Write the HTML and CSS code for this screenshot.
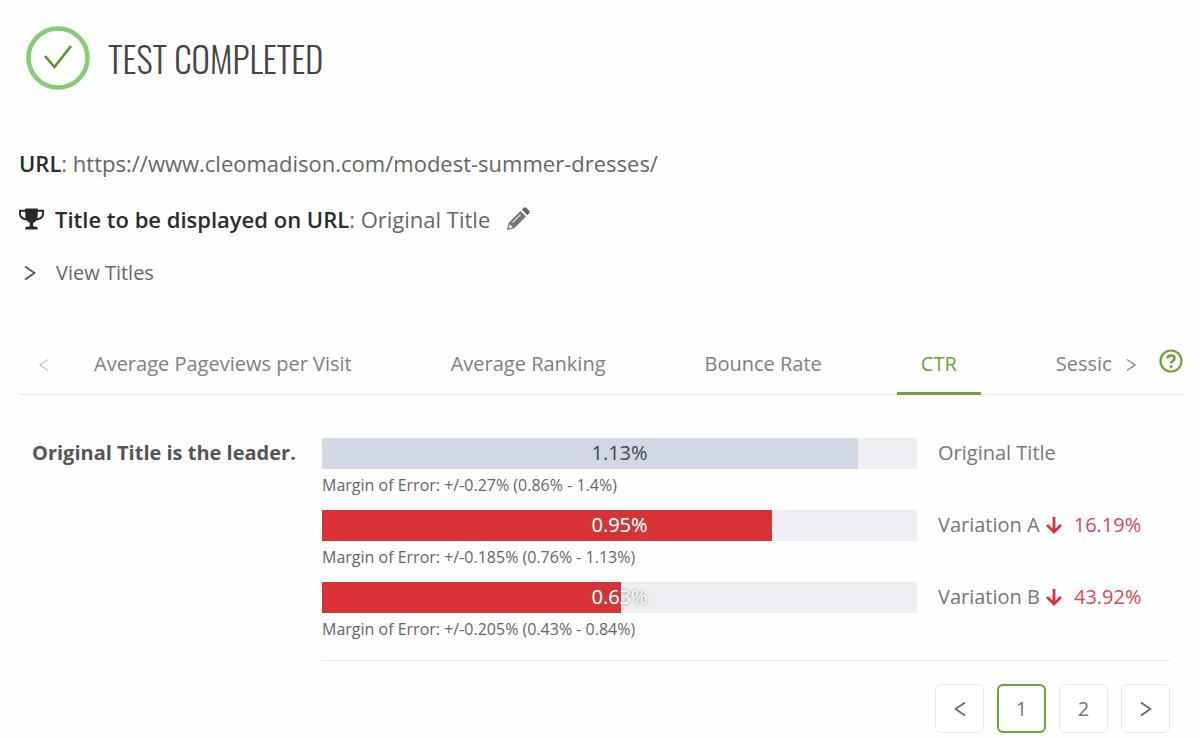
FILE: index.html
```
<!DOCTYPE html>
<html lang="en">
<head>
  <meta charset="utf-8">
  <title>Test Completed</title>
  <link rel="stylesheet" href="styles.css">
</head>
<body>
  <div id="main">
    <header class="status">
      <svg class="status-icon" viewBox="0 0 64 64">
        <circle cx="32" cy="32" r="29.5" fill="none" stroke="#84cd72" stroke-width="4.6"/>
        <path d="M19 30 L28.500 41 L45 20" fill="none" stroke="#58962f" stroke-width="2.600"/>
      </svg>
      <h1>TEST COMPLETED</h1>
    </header>

    <p class="info"><b>URL</b>: https://www.cleomadison.com/modest-summer-dresses/</p>

    <div class="info title-row">
      <svg class="trophy" viewBox="0 0 26 24">
        <path fill="#282828" d="M6.500 1h13v1.500H26v4c0 4-3.500 6.500-8 7-1 1.300-2.200 2-3.200 2.300V19.500c2.700.2 4.200 .7 4.700 2v1.500H6.500v-1.500c.5-1.300 2-1.800 4.700-2v-3.700c-1-.3-2.200-1-3.200-2.300C3.500 13 0 10.500 0 6.500V2.500h6.500zM2 4.500v2c0 2.200 1.500 4 4.800 4.700C6.500 9.500 6.500 7 6.500 4.500zm22 0h-4.500c0 2.500 0 5-.3 6.700C22.500 10.500 24 8.700 24 6.500z"/>
      </svg>
      <p><b>Title to be displayed on URL</b>: Original Title</p>
      <button class="plain edit" aria-label="Edit title">
        <svg viewBox="0 0 26 26" width="26" height="26">
          <path d="M3.500 17 L15.500 5 L21 10.500 L9 22.500 L2 24 Z" fill="#777"/>
          <path d="M16.800 3.700 L18.700 1.800 Q20 .7 21.300 1.800 L24.200 4.700 Q25.300 6 24.200 7.300 L22.300 9.200 Z" fill="#666"/>
          <path d="M4.700 18.300 L7.800 21.400 L3.800 22.300 Z" fill="#fff"/>
          <path d="M7.500 16.500 L15.700 8.300" stroke="#ddd" stroke-width="1.200"/>
        </svg>
      </button>
    </div>

    <button class="plain view-titles">
      <svg viewBox="0 0 12 16" width="12" height="16"><path d="M1 1.500 L10.500 8 L1 14.500" fill="none" stroke="#555" stroke-width="1.800"/></svg>
      View Titles
    </button>

    <div class="tab-bar">
      <button class="plain arrow-prev" aria-label="Previous tabs">
        <svg viewBox="0 0 12 16" width="12" height="16"><path d="M10 2.500 L2 8 L10 13.500" fill="none" stroke="#ccc" stroke-width="1.500"/></svg>
      </button>
      <div class="tabs" role="tablist">
        <button class="plain tab" role="tab">Average Pageviews per Visit</button>
        <button class="plain tab" role="tab">Average Ranking</button>
        <button class="plain tab" role="tab">Bounce Rate</button>
        <button class="plain tab active" role="tab" aria-selected="true">CTR</button>
        <button class="plain tab" role="tab">Session</button>
      </div>
      <button class="plain arrow-next" aria-label="Next tabs">
        <svg viewBox="0 0 12 16" width="12" height="16"><path d="M2 2.500 L10 8 L2 13.500" fill="none" stroke="#888" stroke-width="1.500"/></svg>
      </button>
      <button class="plain help" aria-label="Help">
        <svg viewBox="0 0 24 24" width="24" height="24" fill="none" stroke="#6aa338">
          <circle cx="12" cy="12" r="10.500" stroke-width="2.200"/>
          <path d="M8.500 9.500 C8.700 5.500 15.500 5.500 15.500 9.500 C15.500 11.800 12.200 11.800 12.200 14.500" stroke-width="2.600"/>
          <circle cx="12.200" cy="17.500" r="1.500" fill="#6aa338" stroke="none"/>
        </svg>
      </button>
    </div>

    <div class="results">
      <p class="leader">Original Title is the leader.</p>
      <div class="rows">
        <div class="row">
          <div class="track">
            <div class="fill" style="width: 90%"></div>
            <span class="value">1.13%</span>
          </div>
          <p class="name">Original Title</p>
          <p class="margin">Margin of Error: +/-0.27% (0.86% - 1.4%)</p>
        </div>
        <div class="row losing">
          <div class="track">
            <div class="fill" style="width: 75.7%"></div>
            <span class="value">0.95%</span>
          </div>
          <p class="name">Variation A
            <svg class="down" viewBox="0 0 18 18"><path d="M9 1 V15.500 M2 9 L9 16 L16 9" fill="none" stroke="#d93234" stroke-width="2.800"/></svg>
            <span class="drop">16.19%</span></p>
          <p class="margin">Margin of Error: +/-0.185% (0.76% - 1.13%)</p>
        </div>
        <div class="row losing">
          <div class="track">
            <div class="fill" style="width: 50.2%"></div>
            <span class="value">0.63%</span>
          </div>
          <p class="name">Variation B
            <svg class="down" viewBox="0 0 18 18"><path d="M9 1 V15.500 M2 9 L9 16 L16 9" fill="none" stroke="#d93234" stroke-width="2.800"/></svg>
            <span class="drop">43.92%</span></p>
          <p class="margin">Margin of Error: +/-0.205% (0.43% - 0.84%)</p>
        </div>
        <nav class="pages">
          <button class="page" aria-label="Previous page">
            <svg viewBox="0 0 12 16" width="12" height="16"><path d="M11 1.500 L1.500 8 L11 14.500" fill="none" stroke="#666" stroke-width="1.800"/></svg>
          </button>
          <button class="page current">1</button>
          <button class="page">2</button>
          <button class="page" aria-label="Next page">
            <svg viewBox="0 0 12 16" width="12" height="16"><path d="M1 1.500 L10.500 8 L1 14.500" fill="none" stroke="#666" stroke-width="1.800"/></svg>
          </button>
        </nav>
      </div>
    </div>
  </div>
</body>
</html>
```
FILE: styles.css
```
*{
  box-sizing: border-box;
  padding: 0;
  margin: 0;
}

body{
  background-color: #fefefe;
  color: #666;
  font-family: "Open Sans", "Liberation Sans", sans-serif;
  font-size: 20px;
  line-height: 30px;
}

svg{
  display: block;
  flex: none;
}

.plain{
  display: flex;
  align-items: center;
  background: none;
  border: none;
  color: inherit;
  font: inherit;
  cursor: pointer;
}

#main{
  padding: 24px 17px 0 19px;
}

/* heading */
.status{
  display: flex;
  align-items: center;
  gap: 18px;
  padding-left: 7px;
  margin-bottom: 56px;
}
.status-icon{
  width: 64px;
  height: 68px;
}
h1{
  color: #444;
  font-family: Oswald, "Liberation Sans Narrow", sans-serif;
  font-size: 35px;
  font-weight: 300;
  line-height: 48px;
}

.info{
  font-size: 22px;
}
.info b{
  color: #2b2b2b;
  font-weight: 600;
}
.title-row{
  display: flex;
  align-items: center;
  margin-top: 26px;
}
.trophy{
  width: 25px;
  height: 24px;
  margin-right: 11px;
}
.edit{
  margin-left: 15px;
}
.view-titles{
  gap: 20px;
  padding-left: 5px;
  margin-top: 24px;
}

/* tabs */
.tab-bar{
  display: flex;
  margin-top: 47px;
  border-bottom: 1px solid #e8e8e8;
}
.tabs{
  display: flex;
  flex: 1;
  gap: 51px;
  min-width: 0;
  overflow: hidden;
  margin-bottom: -1px;
}
.tab{
  flex: none;
  padding: 14px 24px 13px;
  border-bottom: 3px solid transparent;
  color: #808080;
}
.active{
  border-bottom-color: #6aa338;
  color: #6aa338;
}
.arrow-prev{
  width: 51px;
  padding-left: 19px;
}
.arrow-next{
  width: 26px;
  justify-content: flex-end;
}
.help{
  margin-left: 22px;
  padding-bottom: 8px;
}

/* bars */
.results{
  display: grid;
  grid-template-columns: 303px 1fr;
  padding: 43px 13px 0 0;
}
.leader{
  padding-left: 13px;
  font-weight: 700;
  color: #555;
}
.row{
  display: grid;
  grid-template-columns: 1fr 232px;
  column-gap: 21px;
  margin-bottom: 9px;
}
.track{
  position: relative;
  height: 31px;
  background-color: #efeff3;
}
.fill{
  height: 100%;
  background-color: #d1d8e4;
}
.value{
  position: absolute;
  inset: 0;
  text-align: center;
  color: #444;
}
.losing .fill{
  background-color: #d93234;
}
.losing .value{
  color: #fff;
  text-shadow: 0 0 3px #777;
}
.margin{
  font-size: 16px;
  line-height: 32px;
}
.name{
  display: flex;
  align-items: center;
  height: 30px;
  color: #777;
}
.down{
  width: 18px;
  height: 18px;
  margin: 0 11px 0 5px;
}
.drop{
  color: #d94a50;
}

.pages{
  display: flex;
  justify-content: flex-end;
  gap: 13px;
  margin-top: 15px;
  padding-top: 23px;
  border-top: 1px solid #e8e8e8;
}
.page{
  display: flex;
  align-items: center;
  justify-content: center;
  width: 49px;
  height: 49px;
  background: #fff;
  border: 1px solid #e8e8e8;
  border-radius: 6px;
  color: #777;
  font: inherit;
  cursor: pointer;
}
.current{
  border: 2px solid #6aa338;
}
```
